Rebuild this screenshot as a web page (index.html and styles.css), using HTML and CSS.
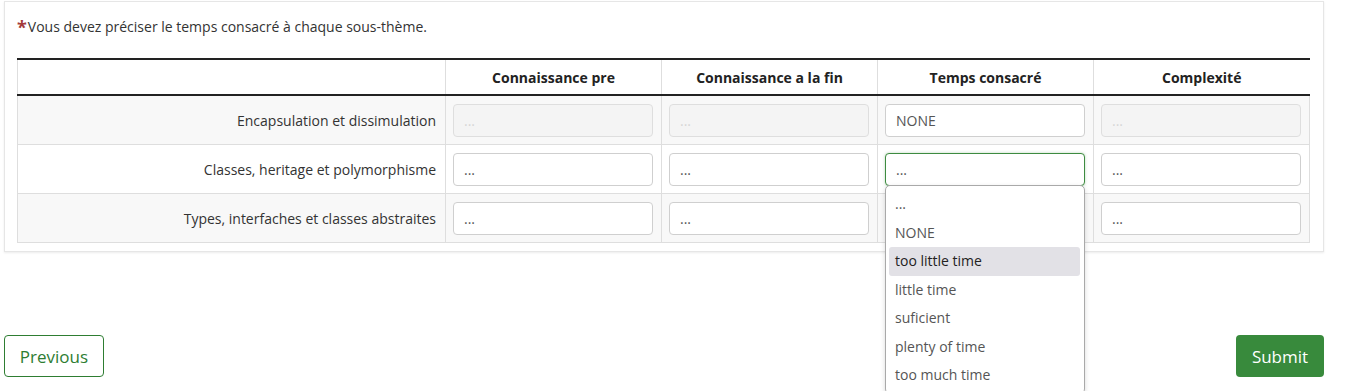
FILE: index.html
```html
<!DOCTYPE html>
<html lang="fr">
<head>
  <meta charset="UTF-8">
  <title>Sous-thèmes</title>
  <link rel="stylesheet" href="styles.css">
</head>
<body>

<!-- Question card -->
<div class="card">
  <p class="question"><span class="required">*</span>Vous devez préciser le temps consacré à chaque sous-thème.</p>

  <table class="matrix">
    <colgroup>
      <col class="label-col">
      <col><col><col><col>
    </colgroup>
    <thead>
      <tr>
        <th></th>
        <th>Connaissance pre</th>
        <th>Connaissance a la fin</th>
        <th>Temps consacré</th>
        <th>Complexité</th>
      </tr>
    </thead>
    <tbody>
      <tr class="row-first">
        <td class="label">Encapsulation et dissimulation</td>
        <td><select disabled><option>...</option></select></td>
        <td><select disabled><option>...</option></select></td>
        <td><select><option>NONE</option></select></td>
        <td><select disabled><option>...</option></select></td>
      </tr>
      <tr>
        <td class="label">Classes, heritage et polymorphisme</td>
        <td><select><option>...</option></select></td>
        <td><select><option>...</option></select></td>
        <td class="open-cell">
          <select class="focused"><option>...</option></select>
          <ul class="dropdown">
            <li>...</li>
            <li>NONE</li>
            <li class="active">too little time</li>
            <li>little time</li>
            <li>suficient</li>
            <li>plenty of time</li>
            <li>too much time</li>
          </ul>
        </td>
        <td><select><option>...</option></select></td>
      </tr>
      <tr>
        <td class="label">Types, interfaches et classes abstraites</td>
        <td><select><option>...</option></select></td>
        <td><select><option>...</option></select></td>
        <td><select><option>...</option></select></td>
        <td><select><option>...</option></select></td>
      </tr>
    </tbody>
  </table>
</div>

<!-- Navigation -->
<div class="nav-buttons">
  <button class="btn-outline">Previous</button>
  <button class="btn-submit">Submit</button>
</div>

</body>
</html>
```

FILE: styles.css
```css
/* General Reset */
* {
  margin: 0;
  padding: 0;
  box-sizing: border-box;
  font-family: "Open Sans", sans-serif;
}

body {
  background: #fff;
  color: #333;
  font-size: 14px;
  min-height: 100vh;
  padding-bottom: 20px;
}

/* Card */
.card {
  width: 1320px;
  margin: 1px 0 0 4px;
  padding: 14px 13px 8px 12px;
  border: 1px solid #e6e6e6;
  box-shadow: 0 1px 2px rgba(0, 0, 0, 0.08);
  background: #fff;
}

.question {
  line-height: 22px;
  margin-bottom: 20px;
  color: #333;
}

.required {
  color: #a33a3a;
  font-size: 18px;
  font-weight: bold;
  vertical-align: -2px;
  margin-right: 1px;
}

/* Matrix table */
.matrix {
  width: 1293px;
  border-collapse: collapse;
  table-layout: fixed;
}

.label-col {
  width: 428px;
}

.matrix thead tr {
  border-top: 2px solid #222;
  border-bottom: 2px solid #222;
}

.matrix th {
  height: 36px;
  font-weight: bold;
  color: #222;
  text-align: center;
  border-left: 1px solid #dedede;
}

.matrix td {
  padding: 8px 8px 7px 7px;
  border: 1px solid #dedede;
  height: 48px;
}

.matrix .row-first td {
  height: 49px;
}

.matrix tbody tr:nth-child(odd) {
  background: #f8f8f8;
}

.matrix td.label {
  text-align: right;
  color: #333;
  padding-right: 9px;
}

.matrix select {
  appearance: none;
  width: 100%;
  height: 33px;
  padding: 0 10px;
  border: 1px solid #cfcfcf;
  border-radius: 4px;
  background: #fff;
  color: #555;
  font-size: 14px;
  outline: none;
}

.matrix select:disabled {
  background: #f3f3f3;
  color: #c8c8c8;
  border-color: #d4d4d4;
}

.matrix select.focused {
  border-color: #3d8b40;
  box-shadow: 0 0 3px rgba(61, 139, 64, 0.35);
}

/* Open dropdown */
.open-cell {
  position: relative;
}

.dropdown {
  position: absolute;
  top: 40px;
  left: 7px;
  width: 200px;
  list-style: none;
  background: #fff;
  border: 1px solid #a9a9a9;
  border-radius: 5px;
  box-shadow: 0 2px 5px rgba(0, 0, 0, 0.15);
  padding: 4px 4px 3px 3px;
  z-index: 10;
}

.dropdown li {
  height: 28.5px;
  line-height: 28.5px;
  padding-left: 6px;
  color: #555;
  border-radius: 3px;
}

.dropdown li.active {
  background: #e2e1e6;
  color: #222;
}

/* Navigation buttons */
.nav-buttons {
  width: 1320px;
  margin: 83px 0 0 4px;
  display: flex;
  justify-content: space-between;
}

.nav-buttons button {
  height: 42px;
  font-size: 17px;
  border-radius: 4px;
  cursor: pointer;
}

.btn-outline {
  width: 100px;
  background: #fff;
  color: #2e7d32;
  border: 1px solid #2e7d32;
}

.btn-submit {
  width: 88px;
  background: #388a3c;
  color: #fff;
  border: none;
}
```
